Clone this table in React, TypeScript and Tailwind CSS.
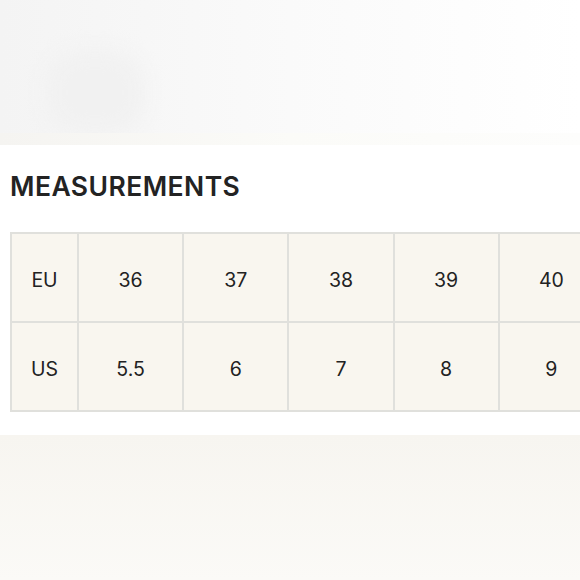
import React from "react";

const eu = ["36", "37", "38", "39", "40"];
const us = ["5.5", "6", "7", "8", "9"];

export default function App() {
  return (
    <div className="w-[580px] h-[580px] overflow-hidden bg-white flex flex-col" style={{ fontFamily: "Inter, 'Liberation Sans', sans-serif" }}>
      <div className="h-[145px] shrink-0 relative overflow-hidden bg-gradient-to-r from-[#f4f4f4] via-[#fafafa] to-white">
        <div className="absolute left-[45px] top-[50px] w-[100px] h-[85px] rounded-[36px] bg-[#f1f1f1] blur-[10px]" />
        <div className="absolute left-0 right-0 bottom-0 h-[12px] bg-gradient-to-r from-[#f5f4f1] via-[#fbfbf8] to-[#fdfdfc]" />
      </div>
      <div className="pl-[10px] pt-[25px]">
        <h2 className="text-[26.5px] leading-[32px] font-semibold tracking-[0.45px] text-[#232323]">MEASUREMENTS</h2>
        <div className="mt-[30px] flex flex-col w-[620px] border-t-2 border-l-2 border-[#e0e0dc] bg-[#f9f6ef]">
          {[{ k: "EU", v: eu }, { k: "US", v: us }].map((row) => (
            <div key={row.k} className="flex h-[89px] border-b-2 border-[#e0e0dc]">
              <div className="w-[67px] shrink-0 border-r-2 border-[#e0e0dc] flex items-center justify-center pt-[6px] text-[19.5px] text-[#222]">
                {row.k}
              </div>
              {row.v.map((c) => (
                <div key={c} className="w-[105.2px] shrink-0 border-r-2 border-[#e0e0dc] flex items-center justify-center pt-[6px] text-[19.5px] text-[#222]">
                  {c}
                </div>
              ))}
            </div>
          ))}
        </div>
      </div>
      <div className="mt-[23px] flex-1 bg-gradient-to-b from-[#f7f5f0] to-[#fbfaf7]" />
    </div>
  );
}
